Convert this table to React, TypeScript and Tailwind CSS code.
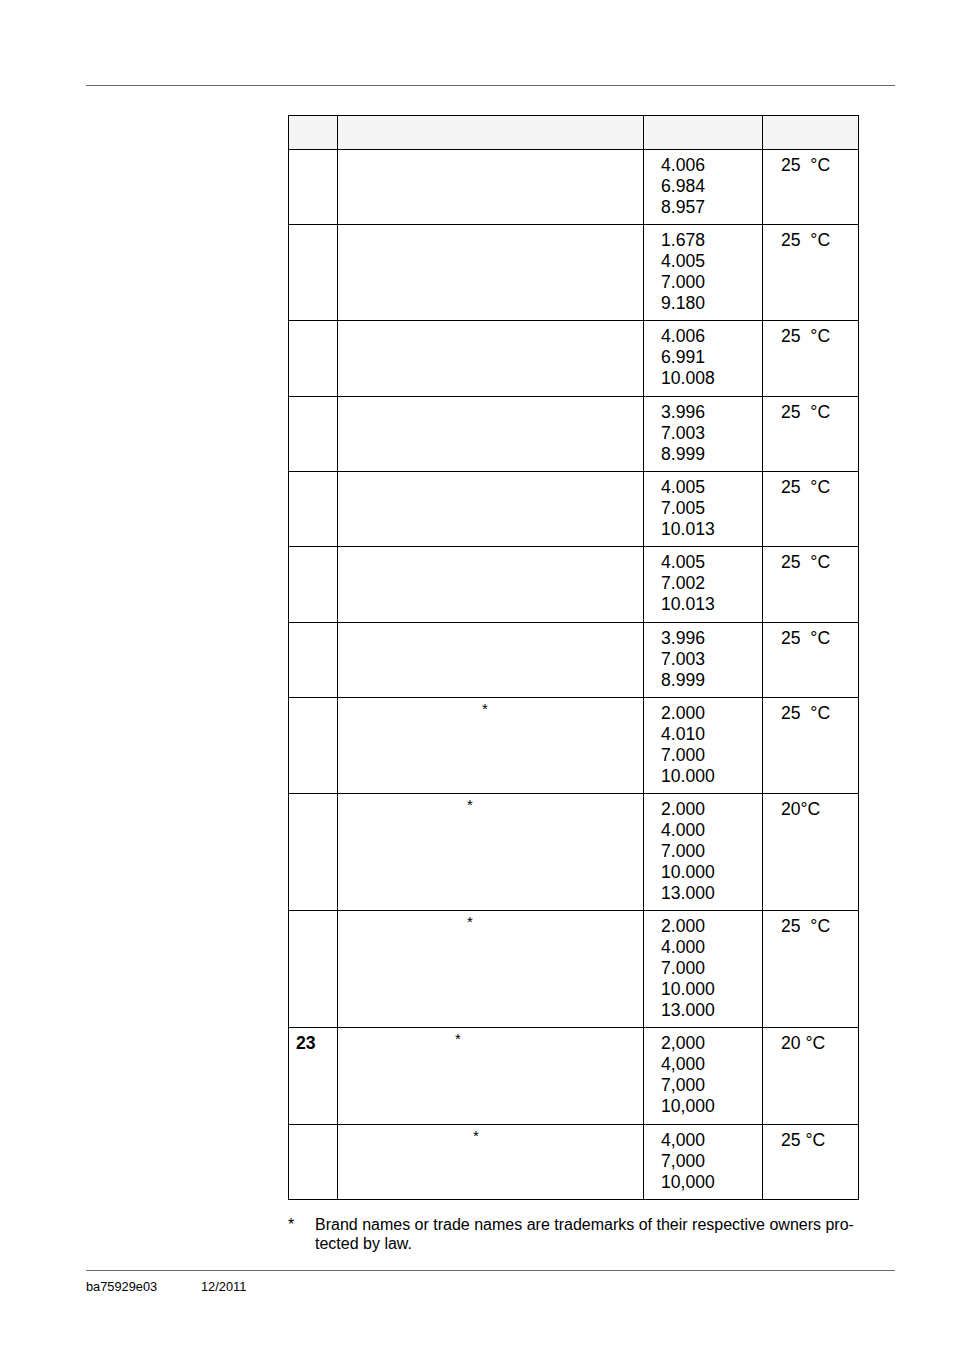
const ROWS = [
  { values: ["4.006", "6.984", "8.957"], temp: "25  °C", h: 75 },
  { values: ["1.678", "4.005", "7.000", "9.180"], temp: "25  °C", h: 96 },
  { values: ["4.006", "6.991", "10.008"], temp: "25  °C", h: 76 },
  { values: ["3.996", "7.003", "8.999"], temp: "25  °C", h: 75 },
  { values: ["4.005", "7.005", "10.013"], temp: "25  °C", h: 75 },
  { values: ["4.005", "7.002", "10.013"], temp: "25  °C", h: 76 },
  { values: ["3.996", "7.003", "8.999"], temp: "25  °C", h: 75 },
  { values: ["2.000", "4.010", "7.000", "10.000"], temp: "25  °C", h: 96, star: "pl-[144px]" },
  { values: ["2.000", "4.000", "7.000", "10.000", "13.000"], temp: "20°C", h: 117, star: "pl-[129px]" },
  { values: ["2.000", "4.000", "7.000", "10.000", "13.000"], temp: "25  °C", h: 117, star: "pl-[129px]" },
  { num: "23", values: ["2,000", "4,000", "7,000", "10,000"], temp: "20 °C", h: 97, star: "pl-[117px]" },
  { values: ["4,000", "7,000", "10,000"], temp: "25 °C", h: 75, star: "pl-[135px]" },
];

export default function App() {
  return (
    <div className="min-h-[1351px] bg-white text-black font-['Liberation_Sans',Arial,sans-serif]">
      <div className="pt-[85px] pl-[86px]">
        <div className="w-[809px] border-t border-[#6b6b6b]" />
      </div>

      {/* table */}
      <div className="mt-[29px] ml-[288px] w-[571px] border-t border-l border-black text-[17.6px] leading-[21px]">
        <div className="flex h-[34px] border-b border-black bg-[#f5f5f5]">
          <div className="w-[49px] border-r border-black" />
          <div className="w-[306px] border-r border-black" />
          <div className="w-[119px] border-r border-black" />
          <div className="w-[96px] border-r border-black" />
        </div>
        {ROWS.map((row, i) => (
          <div key={i} className="flex border-b border-black" style={{ height: row.h }}>
            <div className="w-[49px] border-r border-black pl-[7px] pt-[5px] font-bold">{row.num}</div>
            <div className="w-[306px] border-r border-black pt-[3px]">
              {row.star && <span className={`block text-[15px] leading-[15px] ${row.star}`}>*</span>}
            </div>
            <div className="w-[119px] border-r border-black pl-[17px] pt-[5px]">
              {row.values.map((v) => (
                <div key={v}>{v}</div>
              ))}
            </div>
            <div className="w-[96px] border-r border-black pl-[18px] pt-[5px] whitespace-pre">{row.temp}</div>
          </div>
        ))}
      </div>

      {/* footnote */}
      <div className="mt-[15px] ml-[288px] flex w-[580px] text-[16px] leading-[19px]">
        <span className="w-[27px] shrink-0">*</span>
        <p>Brand names or trade names are trademarks of their respective owners pro-<br />tected by law.</p>
      </div>

      <div className="mt-[17px] pl-[86px]">
        <div className="w-[809px] border-t border-[#6b6b6b]" />
      </div>
      <div className="mt-[8px] flex pl-[86px] text-[12.8px] leading-[16px]">
        <span className="w-[115px]">ba75929e03</span>
        <span>12/2011</span>
      </div>
    </div>
  );
}
